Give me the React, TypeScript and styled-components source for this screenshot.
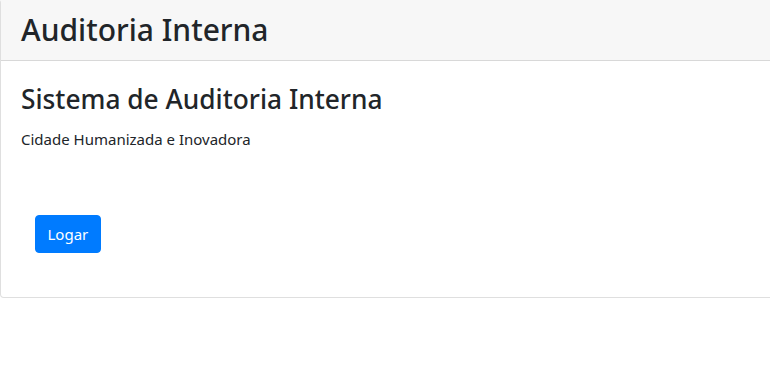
import React from 'react';
import styled, { createGlobalStyle } from 'styled-components';

const GlobalStyle = createGlobalStyle`
  html, body {
    margin: 0;
    padding: 0;
    background: #fff;
    overflow: hidden;
  }
  body {
    color: #212529;
    font-family: "Noto Sans", "Open Sans", sans-serif;
  }
`;

const Card = styled.div`
  background: #fff;
  border: 1px solid rgba(0, 0, 0, 0.125);
  border-radius: 4px;
  display: flex;
  flex-direction: column;
  margin-top: -1px;
  width: calc(100% + 10px);
`;

const CardHeader = styled.div`
  align-items: center;
  background: #f7f7f7;
  border-bottom: 1px solid rgba(0, 0, 0, 0.125);
  display: flex;
  height: 60px;
  padding: 0 20px;
`;

const Title = styled.h1`
  font-size: 30px;
  font-weight: 500;
  line-height: 1.2;
  margin: 0;
`;

const CardBody = styled.div`
  padding: 23px 20px 44px;
`;

const Subtitle = styled.h3`
  font-size: 26.3px;
  font-weight: 500;
  line-height: 1.2;
  margin: 0 0 12px;
`;

const Lead = styled.p`
  font-size: 15px;
  line-height: 1.5;
  margin: 0;
`;

const Form = styled.form`
  padding: 65px 14px 0;
`;

const Button = styled.button`
  background: #007bff;
  border: 1px solid #007bff;
  border-radius: 4px;
  color: #fff;
  cursor: pointer;
  font-family: inherit;
  font-size: 15px;
  height: 38px;
  line-height: 1.5;
  padding: 0 11.5px;
`;

const App: React.FC = () => {
  return (
    <>
      <GlobalStyle />
      <Card>
        <CardHeader>
          <Title>Auditoria Interna</Title>
        </CardHeader>
        <CardBody>
          <Subtitle>Sistema de Auditoria Interna</Subtitle>
          <Lead>Cidade Humanizada e Inovadora</Lead>
          <Form onSubmit={(e) => e.preventDefault()}>
            <Button type="submit">Logar</Button>
          </Form>
        </CardBody>
      </Card>
    </>
  );
};

export default App;
